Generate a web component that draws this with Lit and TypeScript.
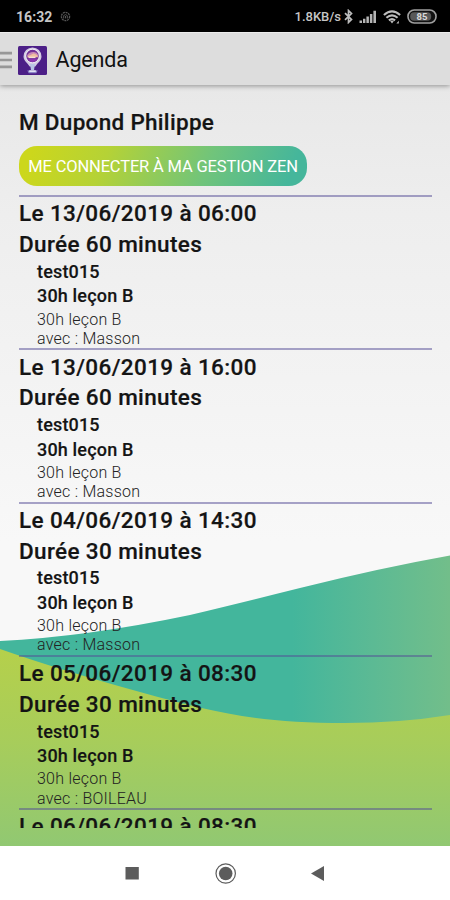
import { LitElement, html, css, nothing } from "lit";
import { customElement, property } from "lit/decorators.js";

interface Lesson {
  date: string;
  duration?: string;
  teacher?: string;
}

const lessons: Lesson[] = [
  { date: "Le 13/06/2019 à 06:00", duration: "Durée 60 minutes", teacher: "Masson" },
  { date: "Le 13/06/2019 à 16:00", duration: "Durée 60 minutes", teacher: "Masson" },
  { date: "Le 04/06/2019 à 14:30", duration: "Durée 30 minutes", teacher: "Masson" },
  { date: "Le 05/06/2019 à 08:30", duration: "Durée 30 minutes", teacher: "BOILEAU" },
  { date: "Le 06/06/2019 à 08:30" },
];

@customElement("status-bar")
class StatusBar extends LitElement {
  static styles = css`
    :host {
      display: flex;
      align-items: center;
      height: 32px;
      box-sizing: border-box;
      padding: 1px 13px 0 16px;
      background: #000;
      color: #c6c6c6;
      font: 700 14px/16px Roboto, sans-serif;
    }
    .time { letter-spacing: 0.05px; }
    .dot { margin-left: 8px; }
    .rate { margin-left: auto; font-weight: 500; font-size: 13px; letter-spacing: -0.02px; }
    svg { display: block; flex: none; }
    .bt { margin-left: 3px; }
    .signal { margin-left: 6px; }
    .wifi { margin-left: 6px; }
    .battery { margin-left: 6px; }
  `;
  render() {
    return html`
      <span class="time">16:32</span>
      <svg class="dot" width="11" height="11" viewBox="0 0 11 11" fill="none" stroke="#565656">
        <circle cx="5.5" cy="5.5" r="4.1" stroke-dasharray="2 .7" stroke-width="1.3" />
        <path d="M3.7 7.5V4.6q1.8-2 3.6 0v2.9M5.5 5v2.4" />
      </svg>
      <span class="rate">1.8KB/s</span>
      <svg class="bt" width="9" height="15" viewBox="0 0 9 15" fill="none" stroke="#bdbdbd" stroke-width="1.7">
        <path d="M1 4.2 7.5 10.5 4.5 13.4V1.6L7.5 4.5 1 10.8" />
      </svg>
      <svg class="signal" width="18" height="13" viewBox="0 0 18 13" fill="#b5b5b5">
        <path d="M.5 10.4h2.5V13H.5zM4 8.8h2.4V13H4zM7.4 6.6h2.5V13H7.4zM10.9 4h2.5v9h-2.5zM14.4 .8h2.6V13h-2.6z" />
      </svg>
      <svg class="wifi" width="18" height="14" viewBox="0 0 18 14" fill="none" stroke="#bdbdbd" stroke-width="2.1">
        <path d="M.9 5Q9-2.2 17.1 5M3.4 7.8q5.6-4.8 11.2 0M5.9 10.4q3.1-2.5 6.2 0" />
        <path d="M7 10.8h4L9 13.4zM13.4 13.4l2.4-2.7v2.7z" fill="#bdbdbd" stroke="none" />
      </svg>
      <svg class="battery" width="30" height="15" viewBox="0 0 30 15">
        <rect x="1" y="1" width="28" height="13" rx="6.2" fill="#111" stroke="#a0a0a0" stroke-width="1.6" />
        <rect x="3.2" y="3.2" width="21" height="8.6" rx="4" fill="#585858" />
        <text x="15" y="11" text-anchor="middle" font-size="9.5" font-weight="700" fill="#dadada">85</text>
      </svg>
    `;
  }
}

@customElement("action-bar")
class ActionBar extends LitElement {
  static styles = css`
    :host {
      display: flex;
      align-items: center;
      height: 53px;
      box-sizing: border-box;
      border-top: 1px solid #ececec;
      background: #ddd;
      box-shadow: 0 1px 5px rgba(0, 0, 0, 0.38);
      position: relative;
      z-index: 1;
      font-family: Roboto, sans-serif;
      color: #111;
    }
    svg { display: block; flex: none; }
    .menu { margin-top: 2px; }
    .logo { margin: 2px 0 0 6px; }
    .title { margin: 2px 0 0 8.5px; font-size: 21.5px; line-height: 26px; letter-spacing: -0.15px; }
  `;
  render() {
    return html`
      <svg class="menu" width="12" height="18" viewBox="0 0 12 18" fill="#989898">
        <path d="M0 .8h12v2.6H0zM0 7.7h12v2.6H0zM0 14.6h12v2.6H0z" />
      </svg>
      <svg class="logo" width="29" height="29" viewBox="0 0 29 29">
        <rect width="29" height="29" rx="1.5" fill="#4c1f87" />
        <path d="M14.5 1.4a9 9 0 0 0-9 9c0 4.5 4.5 6.5 6.2 10.2h5.6c1.7-3.7 6.2-5.7 6.2-10.2a9 9 0 0 0-9-9z" fill="#d3cae2" />
        <circle cx="14.5" cy="10" r="6.5" fill="#733196" />
        <circle cx="14.5" cy="10" r="6.8" fill="none" stroke="#f3eef8" stroke-width=".9" />
        <path d="M8.8 10.2q2-4.8 8.2-4 2.7.4 3.4 4z" fill="#c98ab4" />
        <path d="M8.8 11.3q1-2 4-2.2 2-2.4 4.4-1.2 2.6.6 3 3.4z" fill="#f0bfa0" />
        <path d="M10.5 10.6h7v1.5h-7z" fill="#f6e3d2" />
        <path d="M9.7 12.7h9.6q-1.8 3.2-4.8 3.2t-4.8-3.2z" fill="#8a35b0" />
        <path d="M12 18h5l-1 6h-3z" fill="#b9c4e6" />
        <path d="M9.3 24.6h10.4l-1.4 2.6h-7.6z" fill="#8e86c9" />
        <path d="M11.2 24.2h6.6v1.8h-6.6z" fill="#dfe2f3" />
      </svg>
      <span class="title">Agenda</span>
    `;
  }
}

@customElement("lesson-entry")
class LessonEntry extends LitElement {
  @property({ attribute: false }) lesson!: Lesson;
  static styles = css`
    :host {
      display: block;
      height: 153.3px;
      box-sizing: border-box;
      border-top: 2px solid rgba(84, 76, 150, 0.5);
      padding-top: 1.3px;
      color: #141414;
      font-family: Roboto, sans-serif;
    }
    div { white-space: nowrap; }
    .head { font-size: 22.5px; font-weight: 500; line-height: 30.7px; letter-spacing: 0.37px; -webkit-text-stroke: 0.2px; }
    .detail { padding-left: 18px; }
    .strong { font-size: 18px; font-weight: 500; line-height: 24.5px; letter-spacing: 0.17px; -webkit-text-stroke: 0.15px; }
    .small { font-size: 16px; font-weight: 300; line-height: 19.2px; color: #222; letter-spacing: 0.24px; position: relative; top: 0.8px; }
  `;
  render() {
    const { date, duration, teacher } = this.lesson;
    return html`
      <div class="head">${date}</div>
      ${duration
        ? html`
            <div class="head">${duration}</div>
            <div class="detail">
              <div class="strong">test015</div>
              <div class="strong">30h leçon B</div>
              <div class="small">30h leçon B</div>
              <div class="small">avec : ${teacher}</div>
            </div>
          `
        : nothing}
    `;
  }
}

@customElement("nav-bar")
class NavBar extends LitElement {
  static styles = css`
    :host { display: block; height: 54px; background: #fff; }
    svg { display: block; }
  `;
  render() {
    return html`
      <svg width="450" height="54" viewBox="0 0 450 54" fill="#5c5c5c">
        <rect x="125.5" y="21" width="13.3" height="12.5" />
        <circle cx="225.7" cy="27.5" r="9.7" fill="none" stroke="#5c5c5c" stroke-width="1.2" />
        <circle cx="225.7" cy="27.5" r="6.8" />
        <path d="M311 27.5 324 20v15z" />
      </svg>
    `;
  }
}

@customElement("app-root")
class AppRoot extends LitElement {
  static styles = css`
    :host {
      display: flex;
      flex-direction: column;
      width: 450px;
      height: 900px;
      overflow: hidden;
      font-family: Roboto, sans-serif;
    }
    .screen {
      flex: 1;
      min-height: 0;
      position: relative;
      box-sizing: border-box;
      padding: 23px 18px 18px 19px;
      background: linear-gradient(#e8e8e8, #eeeeee 17%, #f8f8f8 60%);
    }
    .waves { position: absolute; left: 0; top: 460px; display: block; }
    .content {
      position: relative;
      height: 720px;
      overflow: hidden;
    }
    .name {
      font-size: 22.5px;
      font-weight: 500;
      line-height: 29px;
      letter-spacing: 0.3px;
      color: #141414;
      -webkit-text-stroke: 0.2px;
    }
    .connect {
      display: block;
      width: 288px;
      height: 40px;
      margin: 9px 0 9px;
      padding: 1px 0 0;
      border: 0;
      border-radius: 18px;
      background: linear-gradient(112deg, #ccd71c 5%, #b5d236 30%, #70c47b 65%, #45b69b 93%);
      color: #fff;
      font: 400 16.5px/20px Roboto, sans-serif;
      letter-spacing: -0.16px;
      white-space: nowrap;
    }
  `;
  render() {
    return html`
      <status-bar></status-bar>
      <action-bar></action-bar>
      <main class="screen">
        <svg class="waves" width="450" height="301" viewBox="0 545 450 301">
          <defs>
            <linearGradient id="teal" x1="0" x2="1" y1="0" y2="0">
              <stop offset=".65" stop-color="#43b69c" />
              <stop offset=".83" stop-color="#5cba94" />
              <stop offset="1" stop-color="#72be8a" />
            </linearGradient>
            <linearGradient id="green" x1="0" x2="0" y1="0" y2="1">
              <stop offset="0" stop-color="#b5d04b" />
              <stop offset=".45" stop-color="#a8cd5a" />
              <stop offset="1" stop-color="#91c872" />
            </linearGradient>
          </defs>
          <path d="M0 641Q85 637 190 615Q240 603 300 588Q380 568 450 555.5V730H0z" fill="url(#teal)" />
          <path d="M0 649Q60 670 140 692C215 713 260 723 345 723Q400 723 450 715V846H0z" fill="url(#green)" />
        </svg>
        <div class="content">
          <div class="name">M Dupond Philippe</div>
          <button class="connect">ME CONNECTER À MA GESTION ZEN</button>
          ${lessons.map((l) => html`<lesson-entry .lesson=${l}></lesson-entry>`)}
        </div>
      </main>
      <nav-bar></nav-bar>
    `;
  }
}
